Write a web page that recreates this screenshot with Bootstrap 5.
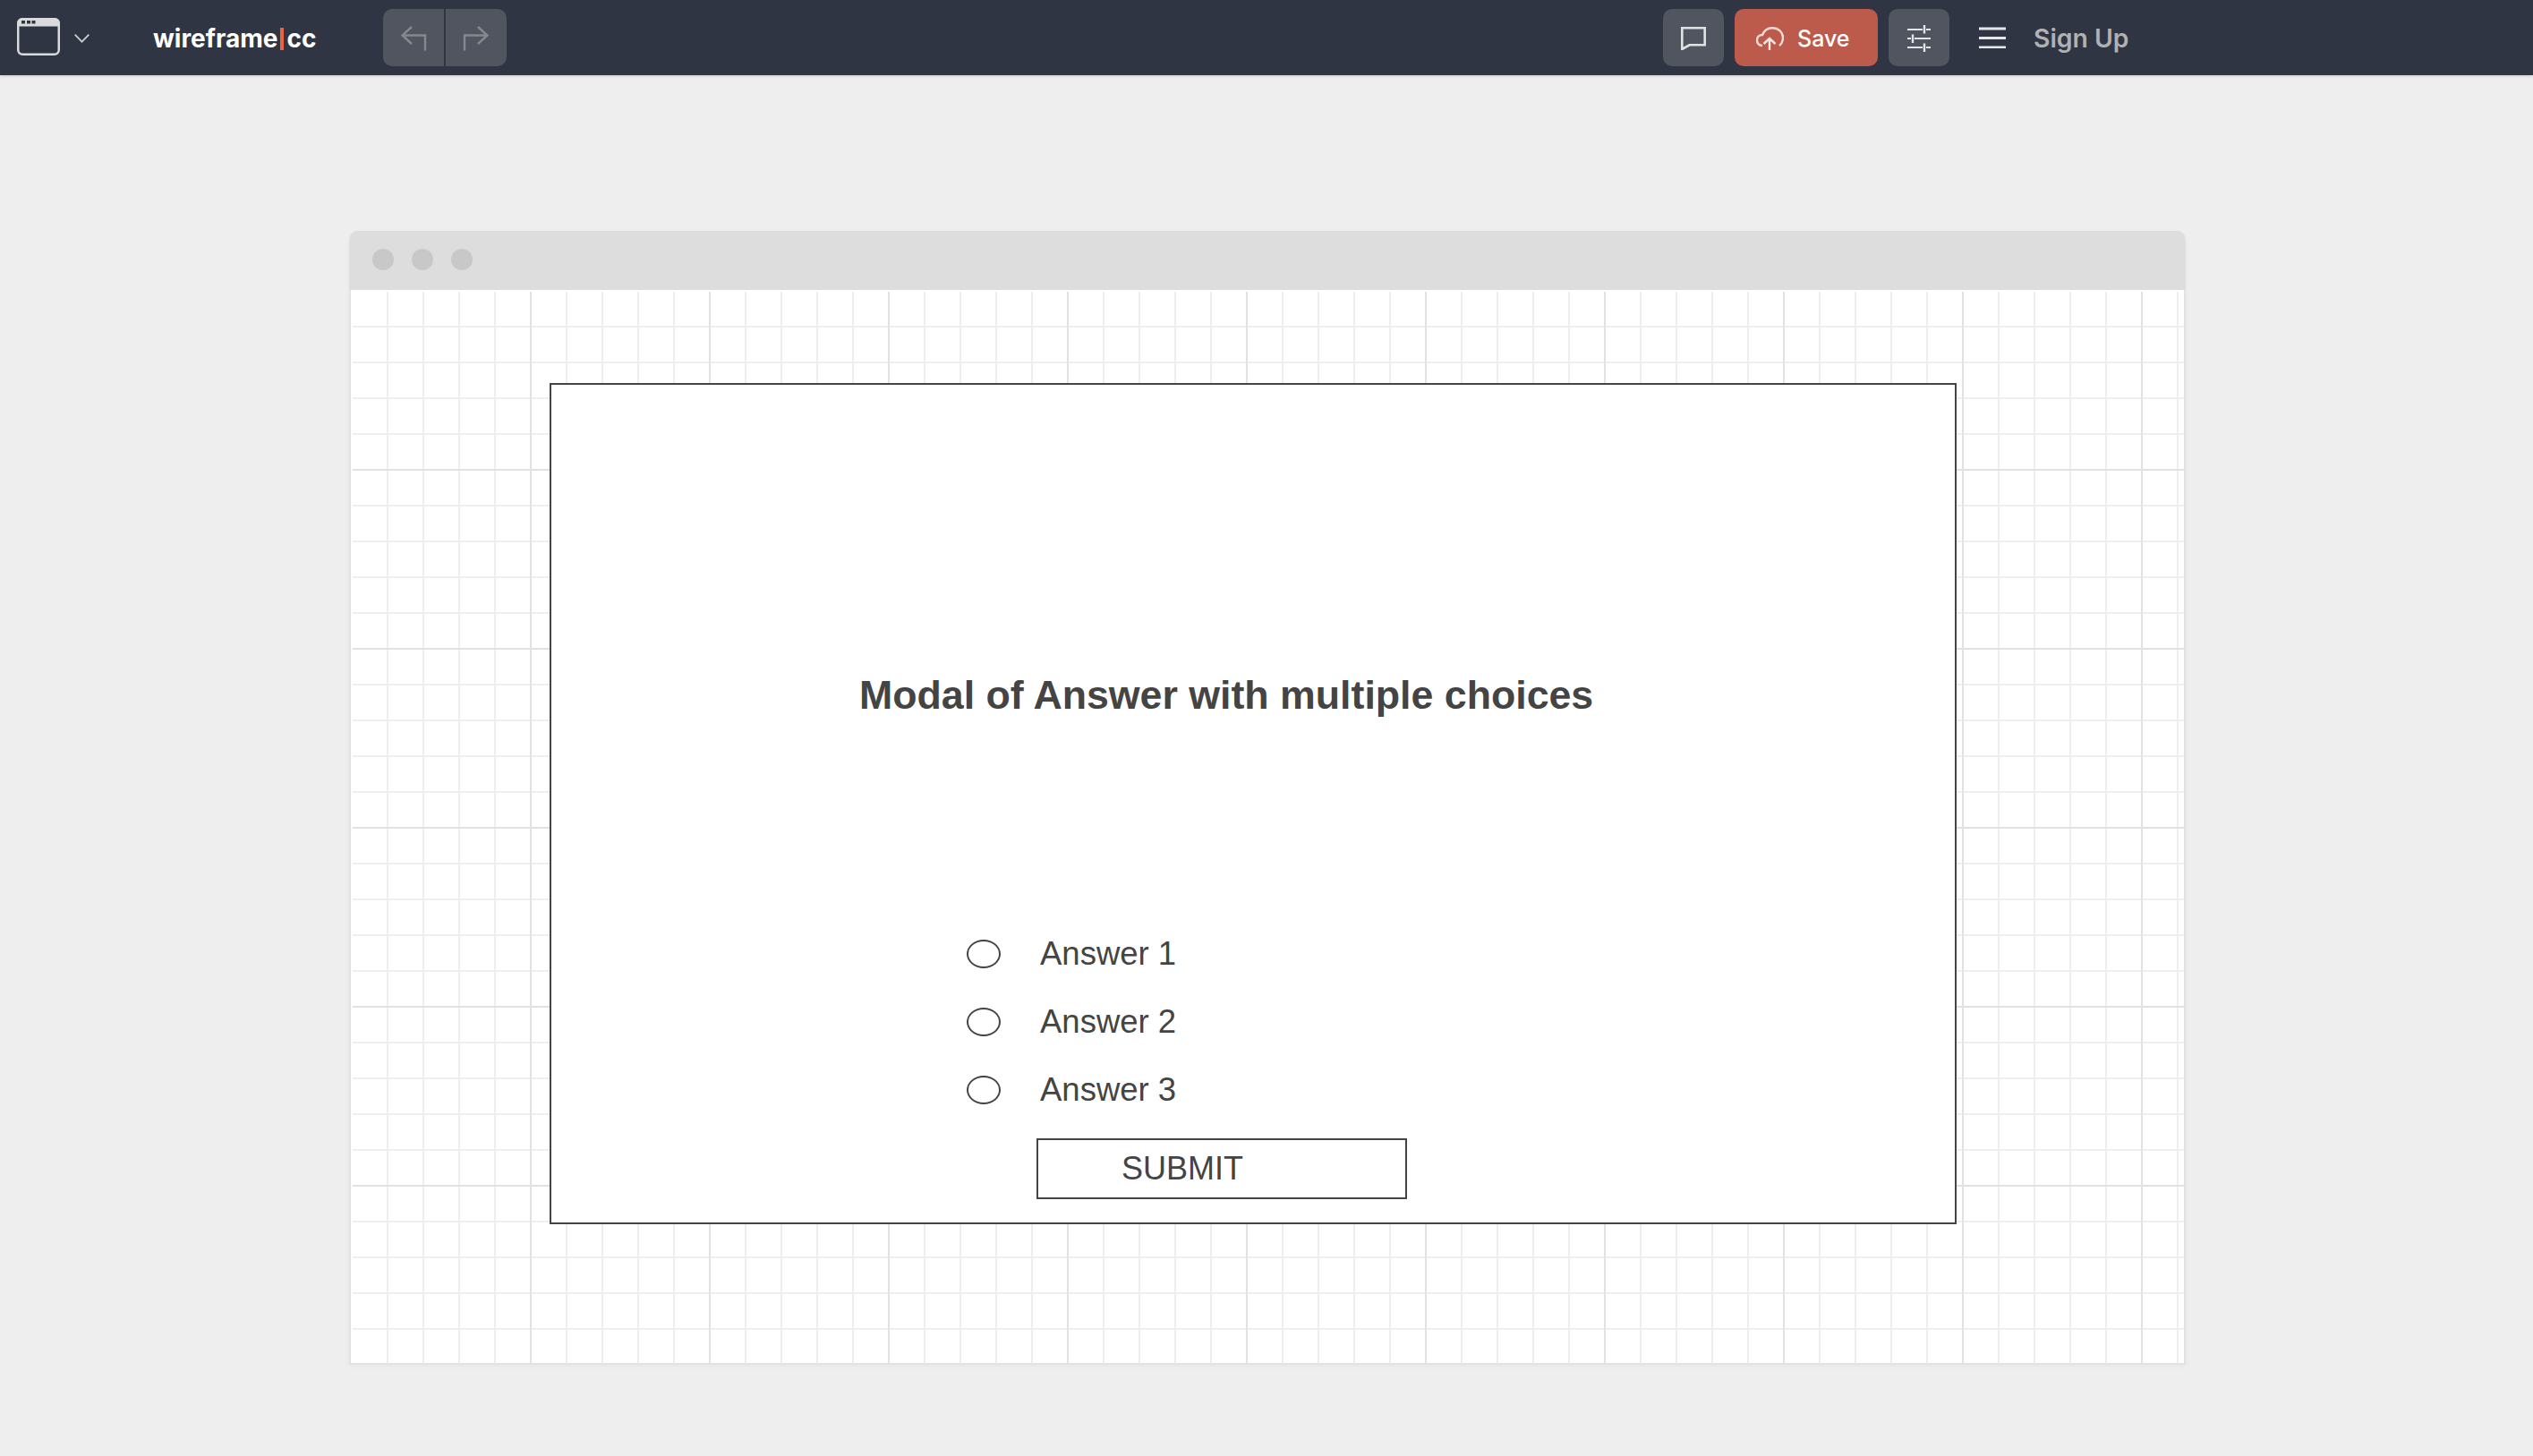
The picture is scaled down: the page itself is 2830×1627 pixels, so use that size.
<!DOCTYPE html>
<html lang="en">
<head>
<meta charset="utf-8">
<title>wireframe.cc</title>
<link href="https://cdn.jsdelivr.net/npm/bootstrap@5.3.0/dist/css/bootstrap.min.css" rel="stylesheet">
<style>
html,body{height:100%}
body{background:#eee;font-family:Inter,"Liberation Sans",sans-serif;overflow:hidden}
.topbar{height:84px;background:#2f3542;box-shadow:0 1px 3px rgba(0,0,0,.18);padding:0}
.appicon{margin-left:19px;margin-top:-2px}
.chev{margin-left:16px;margin-top:2px}
.logo{margin-left:71px;width:182px;color:#fff;font-size:28px;font-weight:700;line-height:1;margin-top:2px}
.logo:hover{color:#fff}
.logo-bar{display:inline-block;flex:none;width:4px;height:25px;background:#ee623c;margin:0 3px 0 3px}
.histgroup{margin-left:75px;width:138px;height:64px;gap:2px;flex:none}
.tb-btn{height:64px;border:0;border-radius:10px;background:#50555f;padding:0;display:flex;align-items:center;justify-content:center;flex:none}
.tb-btn:hover,.tb-btn:disabled{background:#50555f;opacity:1}
.tb-btn svg{margin-top:2px}
.histgroup .tb-btn{flex:1}
.histgroup .tb-btn:first-child{border-radius:10px 0 0 10px}
.histgroup .tb-btn:last-child{border-radius:0 10px 10px 0}
.rightgroup{margin-left:1292px}
.sq{width:68px}
.savebtn{width:160px;margin-left:12px;background:#bc5a4b;color:#fff;font-size:25px;font-weight:500;gap:15px;justify-content:flex-start;padding-left:24px;line-height:1}
.savebtn span{margin-top:3px}
.savebtn:hover{background:#bc5a4b;color:#fff}
.slidersbtn{margin-left:12px}
.burger{margin-left:33px}
.signup{margin-left:31px;color:#b0b1b4;font-size:28.3px;font-weight:600;line-height:1;text-decoration:none;margin-top:2px}
.signup:hover{color:#b0b1b4}
.stage{padding:174px 388px 0 390px}
.win{height:1267px;width:2052px;border-radius:10px 10px 0 0;box-shadow:0 2px 6px rgba(0,0,0,.03)}
.wintitle{height:66px;background:#ddd;border-radius:10px 10px 0 0;padding:0 0 2px 26px;gap:20px}
.dot{width:24px;height:24px;border-radius:50%;background:#c8c8c8}
.winbody{flex:1;background:#fff;border:2px solid #e2e2e2;border-top:0;padding:2px 0 0 2px;min-height:0}
.canvasgrid{position:relative;height:100%;
background-image:
linear-gradient(to right,transparent 198px,#e2e2e2 198px),
linear-gradient(to bottom,transparent 198px,#e2e2e2 198px),
linear-gradient(to right,transparent 38px,#eee 38px),
linear-gradient(to bottom,transparent 38px,#eee 38px);
background-size:200px 200px,200px 200px,40px 40px,40px 40px}
.wf{position:absolute;color:#444;font-family:"Liberation Sans",Arial,sans-serif;font-size:36.5px;line-height:1}
.wf-modal{left:220px;top:102px;width:1572px;height:940px;background:#fff;border:2px solid #444}
.wf-title{left:344px;top:325px;font-size:44.7px;font-weight:700;white-space:nowrap}
.wf-radio{left:464px;width:38px;height:32px;border:2px solid #444;border-radius:50%}
.wf-label{left:546px;white-space:nowrap}
.wf-submit{left:542px;top:842px;width:414px;height:68px;border:2px solid #444;display:flex;align-items:center;padding-left:93px;font-size:36px}
</style>
</head>
<body class="d-flex flex-column">
<nav class="navbar topbar flex-nowrap justify-content-start align-items-center">
  <svg class="appicon" width="48" height="42" viewBox="0 0 48 42" aria-hidden="true">
    <path d="M6 0h36a6 6 0 0 1 6 6v3.500H0V6a6 6 0 0 1 6-6z" fill="#d9dadc"/>
    <rect x="1.250" y="1.250" width="45.500" height="39.500" rx="5" fill="none" stroke="#d9dadc" stroke-width="2.500"/>
    <rect x="5" y="3" width="4" height="3.500" fill="#2f3542"/>
    <rect x="11" y="3" width="4" height="3.500" fill="#2f3542"/>
    <rect x="16.500" y="3" width="4" height="3.500" fill="#2f3542"/>
  </svg>
  <svg class="chev" width="17" height="10" viewBox="0 0 17 10" aria-hidden="true"><path d="M.7.7l7.800 8 7.800-8" fill="none" stroke="#c9cbce" stroke-width="1.800"/></svg>
  <a class="logo text-decoration-none d-flex align-items-center text-nowrap" href="#">wireframe<span class="logo-bar"></span>cc</a>
  <div class="histgroup d-flex">
    <button class="btn tb-btn" type="button" aria-label="Undo"><svg width="30" height="28" viewBox="0 0 30 28"><path d="M28 27.500V10.500H2.500M13 1L2.500 10.500 13 20" fill="none" stroke="#85888e" stroke-width="2.400"/></svg></button>
    <button class="btn tb-btn" type="button" aria-label="Redo"><svg width="30" height="28" viewBox="0 0 30 28"><path d="M2 27.500V10.500H27.500M17 1L27.500 10.500 17 20" fill="none" stroke="#85888e" stroke-width="2.400"/></svg></button>
  </div>
  <button class="btn tb-btn sq rightgroup" type="button" aria-label="Comment"><svg width="28" height="26" viewBox="0 0 28 26"><path d="M1.300 1.300h25.400v19H9.500l-8.200 4.700z" fill="none" stroke="#e0e1e3" stroke-width="2.600"/></svg></button>
  <button class="btn tb-btn savebtn" type="button"><svg width="31" height="26" viewBox="0 0 31 26"><path d="M7 21C3 21 1 18 1 15 1 11 4 9 7 9 9 4 13 1.200 18 1.200 25 1.200 30 6 30 12 30 16 28.500 19 26 21" fill="none" stroke="#f1dad5" stroke-width="2.400"/><path d="M15 26V13M8.500 19L15 13l6.500 6" fill="none" stroke="#f6e6e2" stroke-width="2.400"/></svg><span>Save</span></button>
  <button class="btn tb-btn sq slidersbtn" type="button" aria-label="Settings"><svg width="26" height="30" viewBox="0 0 26 30"><path d="M0 5h17M21 5h5M0 15h4M8 15h18M0 25h17M21 25h5" stroke="#e3e4e6" stroke-width="2.200" fill="none"/><path d="M19 0v9.500M6 10.500v9.500M19 20.500v9.500" stroke="#e3e4e6" stroke-width="2.400" fill="none"/></svg></button>
  <svg class="burger" width="30" height="24" viewBox="0 0 30 24" aria-hidden="true"><path d="M0 2h30M0 12.500h30M0 23h30" stroke="#e6e7e9" stroke-width="2.800"/></svg>
  <a class="signup" href="#">Sign Up</a>
</nav>
<main class="stage flex-grow-1">
  <div class="win d-flex flex-column">
    <div class="wintitle d-flex align-items-center">
      <span class="dot"></span><span class="dot"></span><span class="dot"></span>
    </div>
    <div class="winbody">
      <div class="canvasgrid">
        <div class="wf wf-modal">
          <div class="wf wf-title">Modal of Answer with multiple choices</div>
          <div class="wf wf-radio" style="top:620px"></div>
          <div class="wf wf-label" style="top:618px">Answer 1</div>
          <div class="wf wf-radio" style="top:696px"></div>
          <div class="wf wf-label" style="top:694px">Answer 2</div>
          <div class="wf wf-radio" style="top:772px"></div>
          <div class="wf wf-label" style="top:770px">Answer 3</div>
          <div class="wf wf-submit">SUBMIT</div>
        </div>
      </div>
    </div>
  </div>
</main>
<script src="https://cdn.jsdelivr.net/npm/bootstrap@5.3.0/dist/js/bootstrap.bundle.min.js"></script>
</body>
</html>
